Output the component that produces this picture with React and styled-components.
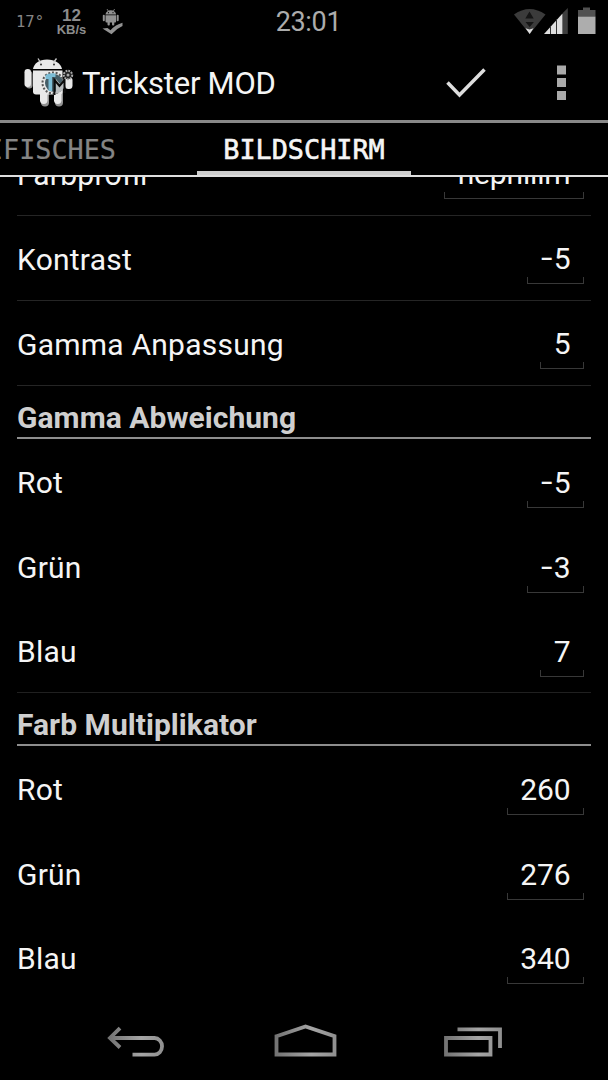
import styled, { createGlobalStyle } from 'styled-components';

const GlobalStyle = createGlobalStyle`
    * {
        box-sizing: border-box;
    }
    body {
        margin: 0;
        background: #000;
    }
`

const Screen = styled.div`
    width: 608px;
    height: 1080px;
    display: flex;
    flex-direction: column;
    overflow: hidden;
    background: #000;
    color: #f5f5f5;
    font-family: Roboto, sans-serif;
`

const StatusBar = styled.div`
    height: 43px;
    flex-shrink: 0;
    display: grid;
    grid-template-columns: 1fr auto 1fr;
    align-items: center;
    padding: 0 11px 0 16px;
`

const StatusGroup = styled.div`
    display: flex;
    align-items: center;
    justify-content: ${props => props.$end ? "flex-end" : "flex-start"};
    height: 43px;
`

const Temperature = styled.span`
    width: 40px;
    font-family: "DejaVu Sans Mono", monospace;
    font-size: 15.5px;
    line-height: 20px;
    color: #858585;
`

const Traffic = styled.div`
    width: 31px;
    margin-right: 15px;
    display: flex;
    flex-direction: column;
    align-items: center;
    font-family: "Liberation Sans", sans-serif;
    font-weight: bold;
    color: #8c8c8c;
`

const TrafficValue = styled.span`
    font-size: 17px;
    line-height: 15px;
`

const TrafficUnit = styled.span`
    font-size: 13px;
    line-height: 13px;
`

const Clock = styled.span`
    padding-left: 4px;
    font-size: 27px;
    line-height: 44px;
    color: #acacac;
    letter-spacing: -0.3px;
`

const ActionBar = styled.div`
    height: 80px;
    flex-shrink: 0;
    display: flex;
    align-items: center;
    padding: 3px 36px 0 22px;
    border-bottom: 3px solid #888;
`

const AppTitle = styled.span`
    flex: 1;
    margin-left: 6px;
    padding-top: 2px;
    font-size: 31px;
    line-height: 40px;
    letter-spacing: -0.25px;
`

const TabBar = styled.div`
    height: 54px;
    flex-shrink: 0;
    display: flex;
    justify-content: space-between;
    overflow: hidden;
    border-bottom: 2px solid #dedede;
    white-space: nowrap;
`

const Tab = styled.div`
    width: ${props => props.$active ? "214px" : "197px"};
    display: flex;
    align-items: center;
    justify-content: ${props => props.$active ? "center" : "flex-end"};
    padding: ${props => props.$active ? "6px 0 0" : "6px 81px 0 0"};
    border-bottom: 4px solid ${props => props.$active ? "#cfcfcf" : "transparent"};
    font-family: "DejaVu Sans Mono", monospace;
    font-size: 26.8px;
    line-height: 44px;
    color: ${props => props.$active ? "#f5f5f5" : "#858585"};
    -webkit-text-stroke: ${props => props.$active ? "0.6px" : "0.2px"};
`

const List = styled.div`
    flex: 1;
    min-height: 0;
    display: flex;
    flex-direction: column;
    justify-content: flex-end;
    overflow: hidden;
    padding: 0 17px 1px;
`

const Row = styled.div`
    height: ${props => props.$divided ? "85px" : "84.45px"};
    flex-shrink: 0;
    display: flex;
    align-items: flex-end;
    justify-content: space-between;
    padding: 0 7px ${props => props.$divided ? "16px" : "15px"} 0;
    border-bottom: ${props => props.$divided ? "1.5px solid #252525" : "0"};
`

const Label = styled.span`
    font-size: 30px;
    line-height: ${props => props.$divided ? "49px" : "51px"};
    letter-spacing: 0.23px;
`

const Value = styled.span`
    display: flex;
    height: 48px;
    padding: 0 13.5px;
    font-size: 30px;
    line-height: 46px;
    letter-spacing: -0.15px;
    background:
        linear-gradient(#383838, #383838) left bottom / 1px 7px no-repeat,
        linear-gradient(#383838, #383838) right bottom / 1px 7px no-repeat,
        linear-gradient(#383838, #383838) left bottom / 100% 1px no-repeat;
`

const Sign = styled.span`
    width: 13.3px;
    transform: translate(1px, -1px) scaleX(1.38);
    transform-origin: left center;
`

const SectionTitle = styled.div`
    height: 53px;
    flex-shrink: 0;
    padding-top: 11px;
    border-bottom: 2px solid #8e8e8e;
    font-size: 30px;
    line-height: 41px;
    font-weight: bold;
    letter-spacing: 0.05px;
    color: #cfcfcf;
`

const GroupEnd = styled.div`
    height: 1px;
    margin-bottom: -0.5px;
    flex-shrink: 0;
    background: #202020;
`

const NavBar = styled.div`
    height: 80px;
    flex-shrink: 0;
    display: flex;
`

const Icon = styled.svg`
    display: block;
    flex-shrink: 0;
`

const firstSettings = [
    { label: "Farbprofil", value: "nephilim" },
    { label: "Kontrast", value: "-5" },
    { label: "Gamma Anpassung", value: "5" },
]

const gammaSettings = [
    { label: "Rot", value: "-5" },
    { label: "Grün", value: "-3" },
    { label: "Blau", value: "7" },
]

const colorSettings = [
    { label: "Rot", value: "260" },
    { label: "Grün", value: "276" },
    { label: "Blau", value: "340" },
]

const Setting = ({ label, value, divided }) => (
    <Row $divided={divided}>
        <Label $divided={divided}>{label}</Label>
        <Value>
            {value.startsWith("-") && <Sign>-</Sign>}
            {value.replace("-", "")}
        </Value>
    </Row>
)

const RootIcon = () => (
    <Icon width="22" height="28" viewBox="102 8 22 28">
        <g fill="#929292">
            <path d="M105.500 14.500c.3-2.500 2.300-4.200 5.300-4.200s5 1.700 5.300 4.200z" />
            <path d="M105.500 15.300h10.600v6.200q0 1-1 1h-8.600q-1 0-1-1z" />
            <rect x="102.800" y="14.800" width="2" height="6.500" rx="1" />
            <rect x="116.700" y="14.800" width="2" height="6.500" rx="1" />
            <rect x="107.500" y="20" width="2.300" height="5.500" rx="1" />
            <rect x="112" y="20" width="2.300" height="5.500" rx="1" />
            <path d="M102.500 28.500l5-.5 3 2.200q5-5.700 12-7.500v3.300q-6 2.500-11 8.200z" />
        </g>
        <path d="M107 9l1.500 2.500M114.600 9l-1.500 2.500" stroke="#929292" strokeWidth=".8" />
        <circle cx="108.500" cy="12.700" r=".6" />
        <circle cx="113" cy="12.700" r=".6" />
    </Icon>
)

const SignalIcons = () => (
    <Icon width="86" height="36" viewBox="512 4 86 36">
        <path d="M515 14.500Q530.500 3.500 546.500 14.500L530.700 34z" fill="#3b3b3b" />
        <path d="M530.500 11.500l4.200 7h-8.400zM526.500 22h8.400l-4.200 5z" fill="#151515" />
        <path d="M526.500 28.200l4 1.200 4-1.200-3.800 5.800z" fill="#ddd" />
        <path d="M568.800 8v26h-5V13z" fill="#3e3e3e" />
        <path d="M545 34L563.500 13.500V34z" fill="#dedede" />
        <path d="M551.500 26v8M557.500 19v15" stroke="#333" strokeWidth="1" />
        <path d="M579 10h5V7.500h7V10h5.500v6.500H579z" fill="#515151" />
        <rect x="579" y="16.500" width="17.500" height="17.500" fill="#adadad" />
    </Icon>
)

const AppIcon = () => (
    <Icon width="54" height="54" viewBox="22 56 54 54">
        <g fill="#929292">
            <rect x="26" y="71" width="6.500" height="17.500" rx="3.200" />
            <rect x="41" y="88" width="8" height="18.500" rx="4" />
            <rect x="55" y="88" width="8" height="18.500" rx="4" />
        </g>
        <g fill="#e9e9e9">
            <path d="M33 69c1-5.500 6-9.500 14-9.500s14 4 15 9.500z" />
            <path d="M33 70.500h29.500v21q0 3-3 3H36q-3 0-3-3z" />
            <rect x="24.500" y="69" width="6.500" height="18" rx="3.200" />
            <rect x="40" y="86" width="7.500" height="18" rx="3.700" />
            <rect x="54" y="86" width="7.500" height="18" rx="3.700" />
            <rect x="65" y="77" width="7.500" height="12" rx="3.500" />
        </g>
        <path d="M38 58.500l2.500 4M56.500 58.500l-3 4" stroke="#ccc" strokeWidth="1.300" />
        <circle cx="41" cy="64.500" r="1" fill="#333" />
        <circle cx="54" cy="64.500" r="1" fill="#333" />
        <circle cx="53" cy="83" r="10.500" fill="none" stroke="#555" strokeWidth="2" strokeDasharray="2 1.700" />
        <circle cx="54" cy="83" r="9" fill="#455d67" />
        <path d="M45.500 75q4-2.500 10-1.500v3.500h-3.500v14h-3.500V79h-3z" fill="#7bbdd6" />
        <path d="M56 79l4 5 4-5v9q-4 6-8 5z" fill="#b9bdbf" />
        <path d="M54.500 95V80l5 6 5-6v13" fill="none" stroke="#0b0b0b" strokeWidth="2" />
        <circle cx="68" cy="75" r="4.200" fill="#222" stroke="#aaa" strokeWidth="2" strokeDasharray="1.800 1" />
        <circle cx="68" cy="75" r="1.500" fill="#aaa" />
    </Icon>
)

const ActionIcons = () => (
    <Icon width="130" height="50" viewBox="442 58 130 50">
        <path d="M447.500 82.500l12 12.500L484.500 69.500" fill="none" stroke="#dedede" strokeWidth="3.500" />
        <path d="M557 65.500h9v9h-9zM557 78h9v9h-9zM557 91h9v9h-9z" fill="#aaa" />
    </Icon>
)

const NavIcons = () => (
    <Icon width="608" height="80" viewBox="0 1000 608 80">
        <defs>
            <linearGradient id="metal" x1="0" x2="1" y1="0" y2="0">
                <stop offset="0" stopColor="#747474" />
                <stop offset="0.6" stopColor="#a5a5a5" />
                <stop offset="1" stopColor="#919191" />
            </linearGradient>
        </defs>
        <g fill="none" stroke="url(#metal)" strokeWidth="3.800">
            <path d="M110.500 1038H154.500a7.500 8.300 0 0 1 0 16.700H132.500M120 1028.200l-10 9.800 10 9.500" />
            <path d="M276.500 1036.200L305.500 1026.500 334.500 1036.200V1054.500H276.500z" />
            <path d="M446 1038h44.500v16.500H446zM457.500 1029.300H500V1048" />
        </g>
    </Icon>
)

const App = () => {
    return (
        <Screen>
            <GlobalStyle />
            <StatusBar>
                <StatusGroup>
                    <Temperature>17°</Temperature>
                    <Traffic>
                        <TrafficValue>12</TrafficValue>
                        <TrafficUnit>KB/s</TrafficUnit>
                    </Traffic>
                    <RootIcon />
                </StatusGroup>
                <Clock>23:01</Clock>
                <StatusGroup $end>
                    <SignalIcons />
                </StatusGroup>
            </StatusBar>
            <ActionBar>
                <AppIcon />
                <AppTitle>Trickster MOD</AppTitle>
                <ActionIcons />
            </ActionBar>
            <TabBar>
                <Tab>GERÄTESPEZIFISCHES</Tab>
                <Tab $active>BILDSCHIRM</Tab>
                <Tab />
            </TabBar>
            <List>
                {firstSettings.map(item => (
                    <Setting key={item.label} {...item} divided />
                ))}
                <SectionTitle>Gamma Abweichung</SectionTitle>
                {gammaSettings.map(item => (
                    <Setting key={item.label} {...item} />
                ))}
                <GroupEnd />
                <SectionTitle>Farb Multiplikator</SectionTitle>
                {colorSettings.map(item => (
                    <Setting key={item.label} {...item} />
                ))}
            </List>
            <NavBar>
                <NavIcons />
            </NavBar>
        </Screen>
    )
}

export default App
